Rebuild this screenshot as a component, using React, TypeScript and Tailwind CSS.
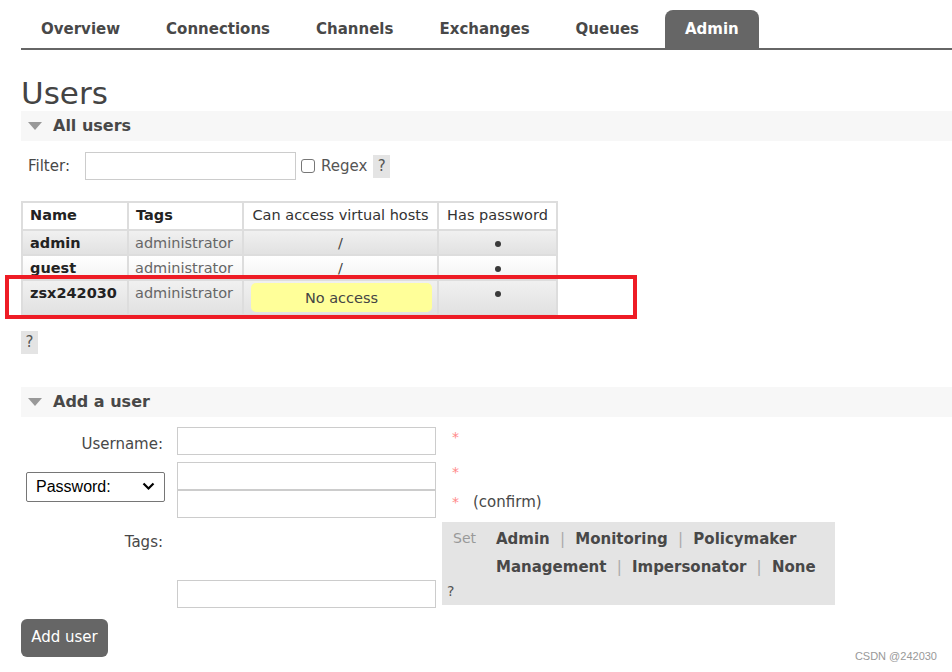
import React from "react";

const Tri = () => (
  <svg width="14" height="8" viewBox="0 0 14 8" className="mr-[11px]">
    <polygon points="0,0 14,0 7,8" fill="#999" />
  </svg>
);

const Dot = () => <span className="inline-block w-[6px] h-[6px] rounded-full bg-[#3a3a3a] align-middle" />;

export default function App() {
  const tabs = ["Overview", "Connections", "Channels", "Exchanges", "Queues", "Admin"];
  const bd = "border-2 border-[#ddd]";
  return (
    <div className="relative w-[952px] h-[672px] overflow-hidden bg-white font-['DejaVu_Sans',Verdana,sans-serif] text-[#484848]">
      {/* nav */}
      <nav className="ml-[21px] pt-[10px] flex border-b-2 border-[#666]">
        {tabs.map((t) => (
          <div
            key={t}
            className={
              "h-[38px] px-[20px] mr-[6px] flex items-center text-[15px] font-bold rounded-t-[8px] " +
              (t === "Admin" ? "bg-[#666] text-white" : "text-[#484848]")
            }
          >
            {t}
          </div>
        ))}
      </nav>

      <h1 className="ml-[21px] mt-[26px] text-[31px] leading-[34px] text-[#444]">Users</h1>

      <div className="ml-[21px] mt-[1px] h-[30px] bg-[#f7f7f7] flex items-center pl-[7px] text-[16px] font-bold">
        <Tri />
        All users
      </div>

      <div className="ml-[28px] mt-[11px] flex items-center text-[15px]">
        <span className="mr-[15px]">Filter:</span>
        <input className="w-[211px] h-[28px] border border-[#ccc] outline-none" />
        <span className="ml-[5px] w-[14px] h-[14px] border border-[#777] rounded-[3px] bg-white" />
        <span className="ml-[6px] text-[#555]">Regex</span>
        <span className="ml-[6px] w-[17px] h-[23px] bg-[#e4e4e4] flex items-center justify-center text-[#555]">?</span>
      </div>

      <div className="relative ml-[21px] mt-[21px] w-fit">
        <table className="table-fixed border-collapse border border-[#ccc] text-[14.5px] whitespace-nowrap">
          <colgroup>
            <col className="w-[106px]" />
            <col className="w-[115px]" />
            <col className="w-[195px]" />
            <col className="w-[119px]" />
          </colgroup>
          <thead>
            <tr className="h-[28px]">
              <th className={bd + " text-left px-[7px] font-bold text-[#222]"}>Name</th>
              <th className={bd + " text-left px-[7px] font-bold text-[#222]"}>Tags</th>
              <th className={bd + " px-[2px] font-normal text-[#333]"}>Can access virtual hosts</th>
              <th className={bd + " px-[2px] font-normal text-[#333]"}>Has password</th>
            </tr>
          </thead>
          <tbody>
            <tr className="h-[25px] bg-gradient-to-b from-[#f1f1f1] to-[#e1e1e1]">
              <td className={bd + " px-[7px] font-bold text-[#222] leading-[20px]"}>admin</td>
              <td className={bd + " px-[6px] text-[#666] leading-[20px]"}>administrator</td>
              <td className={bd + " text-center text-[#444] leading-[20px]"}>/</td>
              <td className={bd + " text-center leading-[20px]"}><Dot /></td>
            </tr>
            <tr className="h-[25px] bg-gradient-to-b from-[#ffffff] to-[#f3f3f3]">
              <td className={bd + " px-[7px] font-bold text-[#222] leading-[20px]"}>guest</td>
              <td className={bd + " px-[6px] text-[#666] leading-[20px]"}>administrator</td>
              <td className={bd + " text-center text-[#444] leading-[20px]"}>/</td>
              <td className={bd + " text-center leading-[20px]"}><Dot /></td>
            </tr>
            <tr className="h-[35px] bg-gradient-to-b from-[#f1f1f1] to-[#e1e1e1]">
              <td className={bd + " px-[7px] font-bold text-[#222] align-top pt-[2px] leading-[20px]"}>zsx242030</td>
              <td className={bd + " px-[6px] text-[#666] align-top pt-[2px] leading-[20px]"}>administrator</td>
              <td className={bd + " pl-[7px] pr-[5px] py-[2px]"}>
                <div className="h-[29px] rounded-[5px] bg-[#ffff99] flex items-center justify-center text-[#444] pt-[2px]">No access</div>
              </td>
              <td className={bd + " text-center align-top pt-[2px] leading-[20px]"}><Dot /></td>
            </tr>
          </tbody>
        </table>
        <div className="absolute left-[-16px] top-[74px] w-[632px] h-[44px] border-[4px] border-[#ee1c25] pointer-events-none" />
      </div>

      <div className="ml-[21px] mt-[15px] w-[17px] h-[23px] bg-[#e4e4e4] flex items-center justify-center text-[15px] text-[#555]">?</div>

      <div className="ml-[21px] mt-[33px] h-[30px] bg-[#f7f7f7] flex items-center pl-[7px] text-[16px] font-bold">
        <Tri />
        Add a user
      </div>

      <div className="mt-[10px] text-[15px]">
        {/* username */}
        <div className="flex items-center">
          <div className="w-[163px] text-right pt-[6px]">Username:</div>
          <input className="ml-[14px] w-[259px] h-[28px] border border-[#ccc] outline-none" />
          <span className="ml-[16px] text-[#f88] text-[14px] self-start">*</span>
        </div>
        {/* password */}
        <div className="flex mt-[6px]">
          <div className="w-[165px] flex items-start pl-[26px] pt-[10px]">
            <div className="w-[139px] h-[30px] border border-[#767676] rounded-[2px] flex items-center justify-between px-[9px] text-[16px] text-black font-['Liberation_Sans',Arial,sans-serif]">
              <span>Password:</span>
              <svg width="13" height="9" viewBox="0 0 13 9">
                <polyline points="1.5,1.5 6.5,6.5 11.5,1.5" fill="none" stroke="#000" strokeWidth="2.2" />
              </svg>
            </div>
          </div>
          <div className="ml-[12px] flex flex-col">
            <input className="w-[259px] h-[28px] border border-[#ccc] outline-none" />
            <input className="w-[259px] h-[28px] border border-[#ccc] outline-none" />
          </div>
          <div className="ml-[16px] flex flex-col text-[14px]">
            <span className="text-[#f88] h-[28px] leading-[20px]">*</span>
            <span className="h-[28px] leading-[24px]">
              <span className="text-[#f88]">*</span>
              <span className="ml-[14px] text-[15px]">(confirm)</span>
            </span>
          </div>
        </div>
        {/* tags */}
        <div className="flex mt-[4px]">
          <div className="w-[163px] text-right pt-[9px]">Tags:</div>
          <div className="ml-[14px] flex flex-col justify-end">
            <input className="w-[259px] h-[28px] border border-[#ccc] outline-none mb-[-3px]" />
          </div>
          <div className="ml-[6px] w-[393px] h-[83px] bg-[#e4e4e4] relative text-[15px]">
            <div className="flex pt-[6px]">
              <span className="ml-[11px] text-[#999] text-[14px] w-[43px]">Set</span>
              <div className="font-bold text-[#484848] leading-[28px] mt-[-3px] whitespace-nowrap">
                <div>
                  Admin <span className="text-[#aaa] font-normal mx-[5px]">|</span> Monitoring{" "}
                  <span className="text-[#aaa] font-normal mx-[5px]">|</span> Policymaker
                </div>
                <div>
                  Management <span className="text-[#aaa] font-normal mx-[5px]">|</span> Impersonator{" "}
                  <span className="text-[#aaa] font-normal mx-[5px]">|</span> None
                </div>
              </div>
            </div>
            <span className="absolute left-[5px] bottom-[3px] text-[14px] text-[#555]">?</span>
          </div>
        </div>
        <button className="ml-[21px] mt-[14px] w-[87px] h-[38px] bg-[#666] text-white rounded-[6px] text-[15px]">Add user</button>
      </div>

      <div className="absolute right-[15px] bottom-[8px] text-[11px] text-[#999] font-['Liberation_Sans',Arial,sans-serif]">CSDN @242030</div>
    </div>
  );
}
